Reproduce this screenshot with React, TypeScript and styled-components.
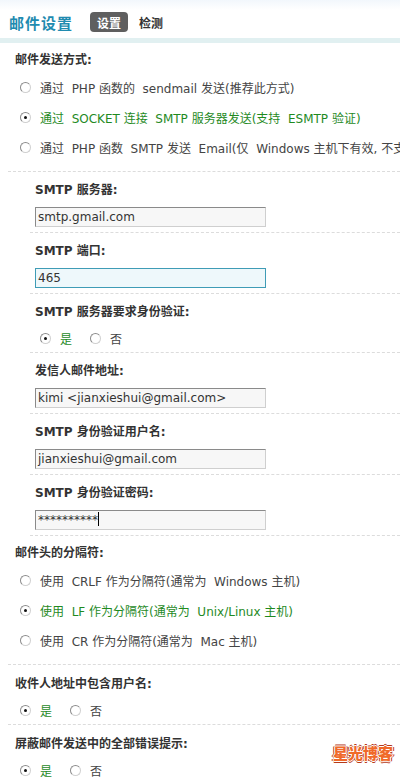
import React from 'react'
import styled, { createGlobalStyle } from 'styled-components'

const GlobalStyle = createGlobalStyle`
    html, body {
        margin: 0;
        padding: 0;
        background: #fff;
        overflow: hidden;
    }
    body {
        font-family: "DejaVu Sans", "Noto Sans CJK SC", sans-serif;
        font-size: 12px;
        color: #333;
    }
`

const Page = styled.div`
    position: relative;
    width: 400px;
    height: 781px;
    overflow: hidden;
    background: linear-gradient(#f2f7fc, #fff 10px);
`

const Header = styled.div`
    display: flex;
    align-items: center;
    height: 43px;
    padding: 6px 0 0 9px;
    border-bottom: 5px solid #e1f0f1;
    box-sizing: border-box;
    white-space: nowrap;
`

const Title = styled.span`
    font-family: "Noto Sans CJK SC", sans-serif;
    font-size: 15px;
    font-weight: bold;
    color: #1f8bb0;
    letter-spacing: 1px;
    margin-right: 17px;
`

const Tab = styled.span<{ $active?: boolean }>`
    display: inline-flex;
    align-items: center;
    justify-content: center;
    height: 20px;
    padding: 0 7px;
    border-radius: 4px;
    font-family: "Noto Sans CJK SC", sans-serif;
    font-size: 12px;
    font-weight: bold;
    color: ${(p) => (p.$active ? '#fff' : '#333')};
    background: ${(p) => (p.$active ? '#5f5f5f' : 'transparent')};
    margin-right: 4px;
`

const Section = styled.div<{ $inner?: boolean; $kind: 'list' | 'input' | 'inline' }>`
    margin-left: ${(p) => (p.$inner ? '30px' : '8px')};
    padding-left: ${(p) => (p.$inner ? '5px' : '7px')};
    padding-top: ${(p) => (p.$kind === 'list' ? '8px' : p.$kind === 'inline' && !p.$inner ? '10px' : '9px')};
    padding-bottom: ${(p) =>
        p.$kind === 'list' ? '9px' : p.$kind === 'input' ? '5px' : '3px'};
    border-bottom: 1px dashed #dcdcdc;
    white-space: nowrap;
`

const Label = styled.div`
    height: 18px;
    line-height: 18px;
    font-weight: bold;
    color: #333;
`

const RadioList = styled.div`
    margin-top: 3px;
`

const RadioRow = styled.div<{ $checked?: boolean }>`
    display: flex;
    align-items: center;
    height: 30px;
    padding-left: 5px;
    gap: 9px;
    white-space: pre;
    color: ${(p) => (p.$checked ? '#1f8a1f' : '#444')};
`

const InlineRadios = styled.div`
    display: flex;
    align-items: center;
    height: 22px;
    margin-top: 6px;
    padding-left: 5px;
`

const InlineOption = styled.span<{ $checked?: boolean }>`
    display: inline-flex;
    align-items: center;
    gap: 9px;
    margin-right: 18px;
    color: ${(p) => (p.$checked ? '#1f8a1f' : '#444')};
`

const RadioDot = styled.span<{ $checked?: boolean }>`
    display: inline-flex;
    align-items: center;
    justify-content: center;
    flex: none;
    width: 9px;
    height: 9px;
    border-radius: 50%;
    border: 1px solid #8c8c8c;
    border-right-color: #d0d0d0;
    border-bottom-color: #d0d0d0;
    background: #fff;
    &::after {
        content: '';
        display: ${(p) => (p.$checked ? 'block' : 'none')};
        width: 3px;
        height: 3px;
        border-radius: 50%;
        background: #111;
    }
`

const TextBox = styled.div<{ $focused?: boolean }>`
    box-sizing: border-box;
    width: 231px;
    height: 20px;
    margin-top: 8px;
    padding: 0 2px;
    line-height: 18px;
    font-size: 12px;
    color: #333;
    border: 1px solid ${(p) => (p.$focused ? '#3f9cb6' : '#8a8a8a')};
    ${(p) => !p.$focused && 'border-right-color: #cfcfcf; border-bottom-color: #cfcfcf;'}
    background: ${(p) => (p.$focused ? '#eef8fb' : '#f7f7f7')};
    overflow: hidden;
`

const Caret = styled.span`
    display: inline-block;
    width: 1px;
    height: 14px;
    background: #000;
    vertical-align: -2px;
`

const Watermark = styled.div`
    position: absolute;
    right: 7px;
    top: 742px;
    font-family: "Noto Sans CJK SC", sans-serif;
    font-size: 15px;
    font-weight: 900;
    color: #f06a2a;
    text-shadow: 1px 0 0 #fff, -1px 0 0 #fff, 0 1px 0 #fff, 0 -1px 0 #fff,
        2px 0 0 #b53a1a, -2px 0 0 #b53a1a, 0 2px 0 #b53a1a, 0 -2px 0 #b53a1a;
`

type Option = { text: string; checked?: boolean }

const RadioGroup = ({ options }: { options: Option[] }) => (
    <RadioList>
        {options.map((o) => (
            <RadioRow key={o.text} $checked={o.checked}>
                <RadioDot $checked={o.checked} />
                <span>{o.text}</span>
            </RadioRow>
        ))}
    </RadioList>
)

const YesNo = () => (
    <InlineRadios>
        <InlineOption $checked>
            <RadioDot $checked />是
        </InlineOption>
        <InlineOption>
            <RadioDot />否
        </InlineOption>
    </InlineRadios>
)

export default function App() {
    return (
        <Page>
            <GlobalStyle />
            <Header>
                <Title>邮件设置</Title>
                <Tab $active>设置</Tab>
                <Tab>检测</Tab>
            </Header>

            <Section $kind="list">
                <Label>邮件发送方式:</Label>
                <RadioGroup
                    options={[
                        { text: '通过  PHP 函数的  sendmail 发送(推荐此方式)' },
                        { text: '通过  SOCKET 连接  SMTP 服务器发送(支持  ESMTP 验证)', checked: true },
                        { text: '通过  PHP 函数  SMTP 发送  Email(仅  Windows 主机下有效, 不支持  ESMTP 验证)' },
                    ]}
                />
            </Section>

            <Section $inner $kind="input">
                <Label>SMTP 服务器:</Label>
                <TextBox>smtp.gmail.com</TextBox>
            </Section>
            <Section $inner $kind="input">
                <Label>SMTP 端口:</Label>
                <TextBox $focused>465</TextBox>
            </Section>
            <Section $inner $kind="inline">
                <Label>SMTP 服务器要求身份验证:</Label>
                <YesNo />
            </Section>
            <Section $inner $kind="input">
                <Label>发信人邮件地址:</Label>
                <TextBox>kimi &lt;jianxieshui@gmail.com&gt;</TextBox>
            </Section>
            <Section $inner $kind="input">
                <Label>SMTP 身份验证用户名:</Label>
                <TextBox>jianxieshui@gmail.com</TextBox>
            </Section>
            <Section $inner $kind="input">
                <Label>SMTP 身份验证密码:</Label>
                <TextBox>
                    **********
                    <Caret />
                </TextBox>
            </Section>

            <Section $kind="list">
                <Label>邮件头的分隔符:</Label>
                <RadioGroup
                    options={[
                        { text: '使用  CRLF 作为分隔符(通常为  Windows 主机)' },
                        { text: '使用  LF 作为分隔符(通常为  Unix/Linux 主机)', checked: true },
                        { text: '使用  CR 作为分隔符(通常为  Mac 主机)' },
                    ]}
                />
            </Section>
            <Section $kind="inline">
                <Label>收件人地址中包含用户名:</Label>
                <YesNo />
            </Section>
            <Section $kind="inline">
                <Label>屏蔽邮件发送中的全部错误提示:</Label>
                <YesNo />
            </Section>

            <Watermark>星光博客</Watermark>
        </Page>
    )
}
